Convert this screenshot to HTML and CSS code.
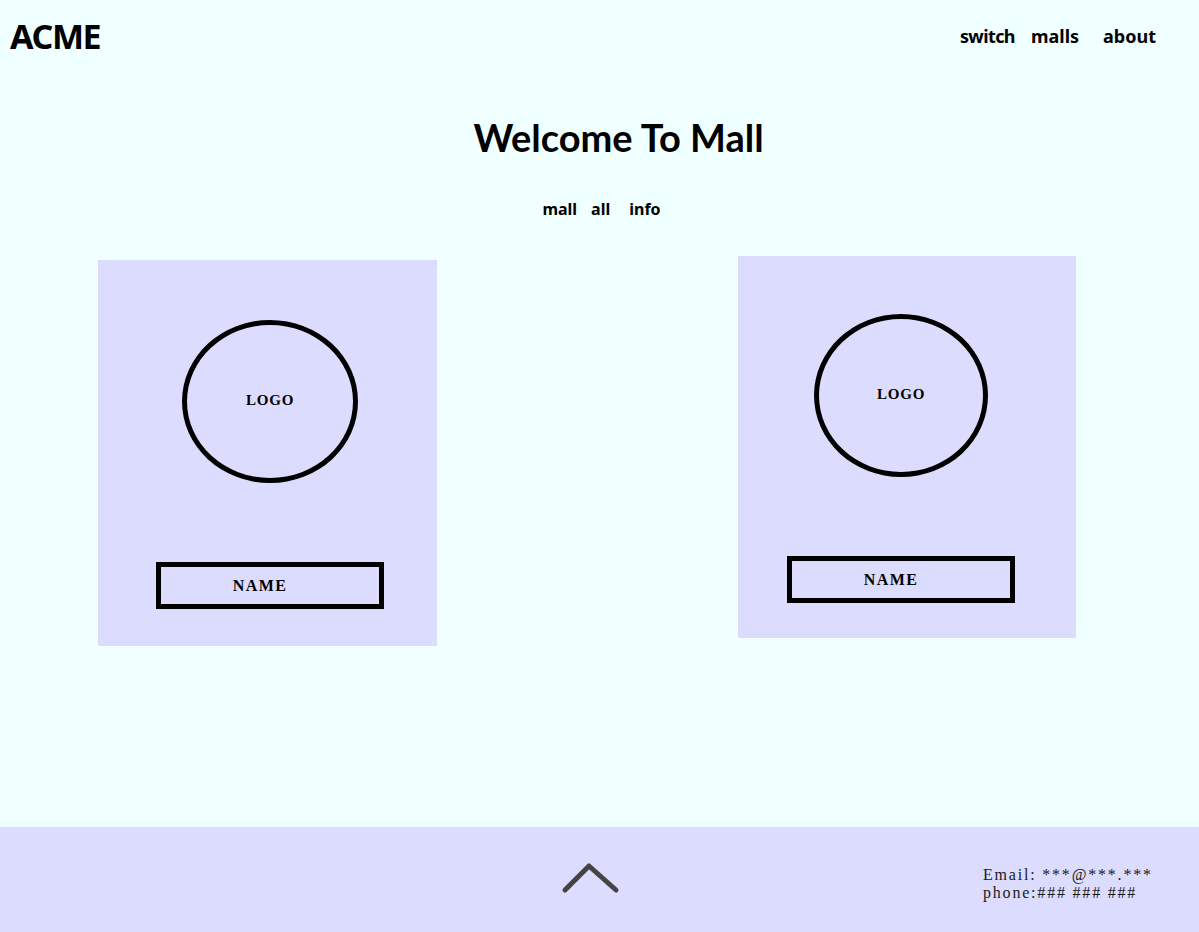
FILE: index.html
```html
<!DOCTYPE html>
<html lang="en">
<head>
<meta charset="utf-8">
<title>ACME Mall</title>
<link rel="stylesheet" href="styles.css">
</head>
<body>
<div class="page">
  <header class="topbar">
    <div class="brand">ACME</div>
    <nav class="main-nav">
      <a href="#" class="nav-link nav-switch">switch</a>
      <a href="#" class="nav-link">malls</a>
      <a href="#" class="nav-link nav-about">about</a>
    </nav>
  </header>

  <main class="content">
    <h1 class="title">Welcome To Mall</h1>
    <nav class="sub-nav">
      <a href="#" class="sub-link">mall</a>
      <a href="#" class="sub-link">all</a>
      <a href="#" class="sub-link sub-info">info</a>
    </nav>

    <section class="cards">
      <article class="card card-a">
        <div class="logo logo-a">LOGO</div>
        <div class="name">NAME</div>
      </article>
      <article class="card card-b">
        <div class="logo logo-b">LOGO</div>
        <div class="name">NAME</div>
      </article>
    </section>
  </main>
</div>

<footer class="footer">
  <a href="#" class="to-top" aria-label="Back to top">
    <svg width="60" height="36" viewBox="0 0 60 36">
      <path d="M4 30 L28 6 L55 30" fill="none" stroke="#444444" stroke-width="5" stroke-linecap="round" stroke-linejoin="round"/>
    </svg>
  </a>
  <div class="contact">
    <div class="contact-line">Email: ***@***.***</div>
    <div class="contact-line">phone:### ### ###</div>
  </div>
</footer>
</body>
</html>
```

FILE: styles.css
```css
html, body {
  margin: 0;
  padding: 0;
}

body {
  background: #f0ffff;
  color: #000;
  font-family: "Noto Sans", Lato, sans-serif;
}

a {
  color: inherit;
  text-decoration: none;
}

.page {
  height: 827px;
  display: flex;
  flex-direction: column;
}

.topbar {
  display: flex;
  justify-content: space-between;
  align-items: flex-start;
  padding: 13px 43px 0 10px;
}

.brand {
  font-size: 34px;
  font-weight: 700;
  line-height: 46px;
  letter-spacing: -1.4px;
}

.main-nav {
  display: flex;
  gap: 15px;
  margin-top: 12px;
  font-size: 18px;
  font-weight: 700;
  line-height: 22px;
}

.nav-switch {
  letter-spacing: -0.6px;
  margin-right: 1px;
}

.nav-about {
  margin-left: 9px;
}

.content {
  display: flex;
  flex-direction: column;
}

.title {
  margin: 53px 0 0 0;
  padding-left: 38px;
  text-align: center;
  font-family: Lato, "Noto Sans", sans-serif;
  font-size: 38px;
  font-weight: 700;
  line-height: 50px;
}

.sub-nav {
  display: flex;
  justify-content: center;
  gap: 14px;
  margin-top: 36px;
  padding-left: 4px;
  font-size: 16px;
  font-weight: 700;
  line-height: 22px;
}

.sub-info {
  margin-left: 5px;
}

.cards {
  display: flex;
  justify-content: space-between;
  align-items: flex-start;
  margin-top: 36px;
  padding: 0 123px 0 98px;
}

.card {
  background: #dcdcff;
  display: flex;
  flex-direction: column;
  align-items: center;
  box-sizing: border-box;
}

.card-a {
  width: 339px;
  height: 386px;
  margin-top: 4px;
  padding: 60px 0 0 5px;
}

.card-b {
  width: 338px;
  height: 382px;
  padding: 58px 12px 0 0;
}

.logo {
  box-sizing: border-box;
  height: 163px;
  border: 5px solid #000;
  border-radius: 50%;
  display: flex;
  align-items: center;
  justify-content: center;
  font-family: "Liberation Serif", "Times New Roman", serif;
  font-size: 15px;
  font-weight: 700;
  letter-spacing: 0.8px;
  padding-bottom: 2px;
}

.logo-a {
  width: 176px;
}

.logo-b {
  width: 174px;
}

.name {
  box-sizing: border-box;
  width: 228px;
  height: 47px;
  margin-top: 79px;
  padding-right: 20px;
  border: 5px solid #000;
  display: flex;
  align-items: center;
  justify-content: center;
  font-family: "Liberation Serif", "Times New Roman", serif;
  font-size: 16px;
  font-weight: 700;
  letter-spacing: 1.4px;
}

.footer {
  height: 105px;
  background: #dcdcff;
  display: flex;
  align-items: flex-start;
}

.to-top {
  display: block;
  margin: 33px 0 0 561px;
  width: 60px;
  height: 36px;
}

.to-top svg {
  display: block;
}

.contact {
  margin: 39px 0 0 auto;
  padding-right: 46px;
  width: 170px;
  font-family: "Liberation Serif", "Times New Roman", serif;
  font-size: 16px;
  line-height: 18px;
  letter-spacing: 1.8px;
  color: #1a1a1a;
}

.contact-line {
  white-space: nowrap;
}
```
